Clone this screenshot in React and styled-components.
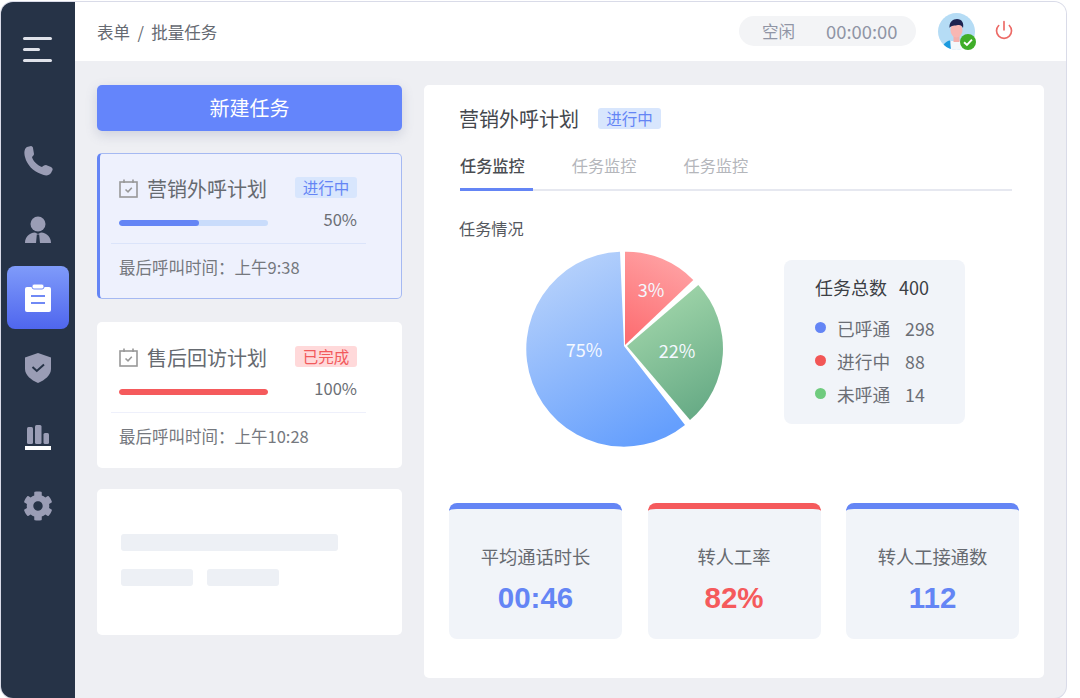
import React from "react";
import styled, { createGlobalStyle } from "styled-components";
import { FaCog } from "react-icons/fa";
import { Power } from "lucide-react";

const GlobalStyle = createGlobalStyle`
  html, body {
    margin: 0;
    padding: 0;
    background: #fff;
    font-family: "Noto Sans CJK SC", "Noto Sans", sans-serif;
  }
  * { box-sizing: border-box; }
`;

const tasks = [
  { id: 1, name: "营销外呼计划", status: "进行中", tone: "blue", percent: 50, fill: 54, time: "上午9:38", active: true },
  { id: 2, name: "售后回访计划", status: "已完成", tone: "red", percent: 100, fill: 100, time: "上午10:28" },
];

const legend = [
  { label: "已呼通", value: 298, color: "#6485f5" },
  { label: "进行中", value: 88, color: "#f25656" },
  { label: "未呼通", value: 14, color: "#6fcb7e" },
];

const stats = [
  { label: "平均通话时长", value: "00:46", color: "#6485f5" },
  { label: "转人工率", value: "82%", color: "#f55a5c" },
  { label: "转人工接通数", value: "112", color: "#6485f5" },
];

function PhoneIcon() {
  return (
    <svg width="32" height="32" viewBox="0 0 32 32" fill="#9a9db5">
      <path d="M5 2 L9 1 C10 1 11 2 11 3 L12 9 C12 10 11 11 10 12 C11 16 15 20 20 22 C21 21 22 20 24 20 L29 22 C31 23 31 25 30 26 L29 28 C27 31 23 31 19 29 C11 26 5 20 3 12 C2 8 2 4 5 2Z" />
    </svg>
  );
}

function UserIcon() {
  return (
    <svg width="28" height="28" viewBox="0 0 28 28" fill="#9a9db5">
      <circle cx="14" cy="8" r="7.5" />
      <path d="M1 27 C1 21 5 17 11 16.5 L14 18 L17 16.5 C23 17 27 21 27 27 Z" />
      <path d="M12.8 18.5 h2.4 l.8 8.5 h-4 Z" fill="#263347" />
    </svg>
  );
}

function ClipboardIcon() {
  return (
    <svg width="26" height="28" viewBox="0 0 26 28">
      <rect x="0" y="3" width="26" height="25" rx="2" fill="#fff" />
      <rect x="7" y="0" width="12" height="5" rx="2" fill="#fff" stroke="#7089f5" strokeWidth="1" />
      <path d="M6 12 h14 M6 19 h14" stroke="#7089f5" strokeWidth="2" />
    </svg>
  );
}

function ShieldIcon() {
  return (
    <svg width="26" height="30" viewBox="0 0 26 30">
      <path d="M13 0 L26 4.5 V16 C26 22 20 27 13 30 C6 27 0 22 0 16 V4.5 Z" fill="#9a9db5" />
      <path d="M7.500 14 L11.800 18 L19 11.500" fill="none" stroke="#263347" strokeWidth="2" />
    </svg>
  );
}

function BarsIcon() {
  return (
    <svg width="26" height="25" viewBox="0 0 26 25">
      <rect x="2" y="2" width="6" height="17" rx="1.500" fill="#9a9db5" />
      <rect x="10" y="0" width="6.500" height="19" rx="1.500" fill="#9a9db5" />
      <rect x="18.500" y="8" width="5.500" height="11" rx="1.500" fill="#9a9db5" />
      <rect x="0" y="21" width="26" height="4" fill="#fff" />
    </svg>
  );
}

function TaskIcon() {
  return (
    <svg width="19" height="19" viewBox="0 0 19 19" fill="none" stroke="#989898" strokeWidth="1.600">
      <rect x="1" y="3" width="17" height="15" />
      <path d="M5 0.500 V4 M14 0.500 V4" />
      <path d="M6.500 10.500 L9 12.800 L12.800 8.800" />
    </svg>
  );
}

function AvatarArt() {
  return (
    <svg width="37" height="37" viewBox="0 0 37 37">
      <defs>
        <clipPath id="avatarClip">
          <circle cx="18.500" cy="18.500" r="18.500" />
        </clipPath>
      </defs>
      <g clipPath="url(#avatarClip)">
        <rect width="37" height="37" fill="#b5dcf5" />
        <path d="M11 37 L13 28 H24 L26 37 Z" fill="#f3f8fb" />
        <path d="M4 37 C4 32 8 28 12 27.500 L13 37 Z" fill="#1b9ade" />
        <rect x="15.500" y="22" width="6" height="7" fill="#f4b0ac" />
        <ellipse cx="18.500" cy="17" rx="6" ry="7.500" fill="#f8b7b3" />
        <path d="M11.500 15 C11 9 15 6 19 6 C24 6 26 10 25 15 C24 12.500 22 11.500 20 12 C17 13 13 12 11.500 15 Z" fill="#1d2350" />
      </g>
    </svg>
  );
}

function PieChart() {
  return (
    <ChartSvg width="200" height="204" viewBox="525 246 200 204">
      <defs>
        <linearGradient id="blueSlice" x1="0.250" y1="0" x2="0.700" y2="1">
          <stop offset="0" stopColor="#b9d3fb" />
          <stop offset="1" stopColor="#659ffd" />
        </linearGradient>
        <linearGradient id="redSlice" x1="0.700" y1="0" x2="0.300" y2="1">
          <stop offset="0" stopColor="#ffa4a6" />
          <stop offset="1" stopColor="#fd6f73" />
        </linearGradient>
        <linearGradient id="greenSlice" x1="0.300" y1="0" x2="0.700" y2="1">
          <stop offset="0" stopColor="#a4d8ac" />
          <stop offset="1" stopColor="#66aa85" />
        </linearGradient>
      </defs>
      <path d="M624 346 L685 425 A97.500 97.500 0 1 1 620 251.700 Z" fill="url(#blueSlice)" />
      <path d="M625 345 L625 251.700 A93 93 0 0 1 693.300 280 Z" fill="url(#redSlice)" />
      <path d="M627 346 L698.300 285 A94 94 0 0 1 690 420 Z" fill="url(#greenSlice)" />
      <PieText x="584" y="357">75%</PieText>
      <PieText x="651" y="297">3%</PieText>
      <PieText x="677" y="358">22%</PieText>
    </ChartSvg>
  );
}

export default function App() {
  return (
    <>
      <GlobalStyle />
      <Window>
        <Sidebar>
          <MenuToggle>
            <MenuLine />
            <MenuLine $short />
            <MenuLine />
          </MenuToggle>
          <NavList>
            <NavItem><PhoneIcon /></NavItem>
            <NavItem><UserIcon /></NavItem>
            <NavItem $active><ClipboardIcon /></NavItem>
            <NavItem><ShieldIcon /></NavItem>
            <NavItem><BarsIcon /></NavItem>
            <NavItem><FaCog size={30} color="#9a9db5" /></NavItem>
          </NavList>
        </Sidebar>
        <Content>
          <Header>
            <Breadcrumb>表单&nbsp;&nbsp;/&nbsp;&nbsp;批量任务</Breadcrumb>
            <HeaderRight>
              <StatusPill>
                <span>空闲</span>
                <Timer>00:00:00</Timer>
              </StatusPill>
              <Avatar>
                <AvatarArt />
                <OnlineBadge>
                  <svg width="16" height="16" viewBox="0 0 15 15">
                    <circle cx="7.500" cy="7.500" r="7.500" fill="#3fae29" />
                    <path d="M3.800 7.800 L6.500 10.300 L11.200 5.200" fill="none" stroke="#fff" strokeWidth="1.800" />
                  </svg>
                </OnlineBadge>
              </Avatar>
              <PowerButton>
                <Power size={20} color="#ec6a66" strokeWidth={2} />
              </PowerButton>
            </HeaderRight>
          </Header>
          <Main>
            <LeftColumn>
              <NewTaskButton>新建任务</NewTaskButton>
              {tasks.map((task) => (
                <TaskCard key={task.id} $active={task.active}>
                  <TaskTop>
                    <TaskIcon />
                    <TaskName>{task.name}</TaskName>
                    <TaskBadge $tone={task.tone}>{task.status}</TaskBadge>
                  </TaskTop>
                  <ProgressRow>
                    <ProgressTrack $tone={task.tone}>
                      <ProgressFill $tone={task.tone} style={{ width: `${task.fill}%` }} />
                    </ProgressTrack>
                    <Percent>{task.percent}%</Percent>
                  </ProgressRow>
                  <TaskFooter $active={task.active}>最后呼叫时间：{task.time}</TaskFooter>
                </TaskCard>
              ))}
              <SkeletonCard>
                <SkeletonBar $wide />
                <SkeletonRow>
                  <SkeletonBar />
                  <SkeletonBar />
                </SkeletonRow>
              </SkeletonCard>
            </LeftColumn>
            <DetailPanel>
              <PanelHead>
                <TitleRow>
                  <PanelTitle>营销外呼计划</PanelTitle>
                  <Badge $tone="blue">进行中</Badge>
                </TitleRow>
                <Tabs>
                  <Tab $active>任务监控</Tab>
                  <Tab>任务监控</Tab>
                  <Tab>任务监控</Tab>
                </Tabs>
                <SectionTitle>任务情况</SectionTitle>
              </PanelHead>
              <ChartRow>
                <PieChart />
                <LegendBox>
                  <LegendTitle>任务总数&nbsp;&nbsp;&nbsp;400</LegendTitle>
                  {legend.map((item) => (
                    <LegendRow key={item.label}>
                      <LegendDot $color={item.color} />
                      <span>{item.label}</span>
                      <LegendValue>{item.value}</LegendValue>
                    </LegendRow>
                  ))}
                </LegendBox>
              </ChartRow>
              <StatGrid>
                {stats.map((stat) => (
                  <StatCard key={stat.label} $color={stat.color}>
                    <StatLabel>{stat.label}</StatLabel>
                    <StatValue $color={stat.color}>{stat.value}</StatValue>
                  </StatCard>
                ))}
              </StatGrid>
            </DetailPanel>
          </Main>
        </Content>
      </Window>
    </>
  );
}

const Window = styled.div`
  display: flex;
  width: 1065px;
  height: 696px;
  margin: 2px 0 0 1px;
  border-radius: 12px;
  overflow: hidden;
  background: #eeeff3;
  box-shadow: 0 0 0 1px #d9dbe8;
`;

const Sidebar = styled.aside`
  flex: 0 0 74px;
  display: flex;
  flex-direction: column;
  align-items: center;
  padding-top: 35px;
  background: #263347;
`;

const MenuToggle = styled.div`
  display: flex;
  flex-direction: column;
  gap: 8px;
  width: 30px;
  margin-bottom: 68px;
`;

const MenuLine = styled.span`
  display: block;
  width: ${(p) => (p.$short ? "17px" : "29px")};
  height: 3px;
  border-radius: 2px;
  background: #dfe2ea;
`;

const NavList = styled.div`
  display: flex;
  flex-direction: column;
  gap: 7px;
`;

const NavItem = styled.div`
  display: flex;
  align-items: center;
  justify-content: center;
  width: 62px;
  height: ${(p) => (p.$active ? "63px" : "62px")};
  margin: ${(p) => (p.$active ? "-2px 0 1px" : "0")};
  border-radius: 8px;
  background: ${(p) => (p.$active ? "linear-gradient(180deg, #7f9bfa 0%, #4f66ee 100%)" : "transparent")};
`;

const Content = styled.div`
  flex: 1;
  display: flex;
  flex-direction: column;
  min-width: 0;
`;

const Header = styled.header`
  flex: 0 0 59px;
  display: flex;
  align-items: center;
  justify-content: space-between;
  padding: 0 52px 0 22px;
  background: #fff;
`;

const Breadcrumb = styled.div`
  font-size: 16.500px;
  color: #666a72;
`;

const HeaderRight = styled.div`
  display: flex;
  align-items: center;
`;

const StatusPill = styled.div`
  display: flex;
  align-items: center;
  gap: 31px;
  width: 177px;
  height: 30px;
  margin-top: -1px;
  padding-left: 23px;
  border-radius: 15px;
  background: #f3f4f6;
  font-size: 16.500px;
  color: #9095a5;
`;

const Timer = styled.span`
  font-size: 18.400px;
`;

const Avatar = styled.div`
  position: relative;
  width: 37px;
  height: 37px;
  margin-left: 22px;
`;

const OnlineBadge = styled.div`
  position: absolute;
  right: -1px;
  bottom: 0;
  line-height: 0;
`;

const PowerButton = styled.div`
  display: flex;
  margin: -4px 0 0 19px;
`;

const Main = styled.main`
  flex: 1;
  display: flex;
  gap: 22px;
  padding: 24px 22px 20px 22px;
  min-height: 0;
`;

const LeftColumn = styled.div`
  flex: 0 0 305px;
  display: flex;
  flex-direction: column;
`;

const NewTaskButton = styled.div`
  display: flex;
  align-items: center;
  justify-content: center;
  height: 46px;
  margin-bottom: 22px;
  padding-bottom: 2px;
  border-radius: 5px;
  background: #6485fb;
  box-shadow: 0 4px 12px rgba(90, 100, 140, 0.22);
  font-size: 20px;
  color: #fff;
`;

const TaskCard = styled.div`
  height: 146px;
  margin-bottom: ${(p) => (p.$active ? "23px" : "21px")};
  padding: ${(p) => (p.$active ? "19px 8px 0 11px" : "20px 8px 0 14px")};
  border-radius: 5px;
  background: ${(p) => (p.$active ? "#eef1fd" : "#fff")};
  border: ${(p) => (p.$active ? "1px solid #a5b9f2" : "none")};
  border-left: ${(p) => (p.$active ? "3px solid #6485f5" : "none")};
`;

const TaskTop = styled.div`
  display: flex;
  align-items: center;
  height: 30px;
  padding-left: 8px;
`;

const TaskName = styled.div`
  width: 148px;
  margin-left: 9px;
  font-size: 20px;
  color: #666a70;
`;

const Badge = styled.span`
  display: inline-flex;
  align-items: center;
  justify-content: center;
  width: 63px;
  height: 21px;
  border-radius: 3px;
  font-size: 15.500px;
  color: ${(p) => (p.$tone === "red" ? "#f25a5c" : "#6485f5")};
  background: ${(p) => (p.$tone === "red" ? "#ffd9da" : "#d8e6fd")};
`;

const TaskBadge = styled(Badge)`
  width: 62px;
  margin-top: -2px;
`;

const ProgressRow = styled.div`
  display: flex;
  align-items: center;
  justify-content: space-between;
  width: 238px;
  height: 28px;
  margin: 5px 0 0 8px;
`;

const ProgressTrack = styled.div`
  width: 149px;
  height: 6px;
  margin-top: 2px;
  border-radius: 3px;
  background: ${(p) => (p.$tone === "red" ? "#ffd9da" : "#c9dcfb")};
  overflow: hidden;
`;

const ProgressFill = styled.div`
  height: 100%;
  border-radius: 3px;
  background: ${(p) => (p.$tone === "red" ? "#f55a5c" : "#6485f5")};
`;

const Percent = styled.span`
  margin-top: -6px;
  font-size: 16.500px;
  color: #6c6f75;
`;

const TaskFooter = styled.div`
  width: 255px;
  margin-top: 7px;
  padding: 11px 0 0 8px;
  border-top: 1px solid ${(p) => (p.$active ? "#dbe4fa" : "#eef0fb")};
  font-size: 16.500px;
  color: #75787e;
`;

const SkeletonCard = styled.div`
  display: flex;
  flex-direction: column;
  gap: 18px;
  height: 146px;
  padding: 45px 0 0 24px;
  border-radius: 5px;
  background: #fff;
`;

const SkeletonRow = styled.div`
  display: flex;
  gap: 14px;
`;

const SkeletonBar = styled.div`
  width: ${(p) => (p.$wide ? "217px" : "72px")};
  height: 17px;
  border-radius: 3px;
  background: #edf0f5;
`;

const DetailPanel = styled.section`
  flex: 1;
  display: flex;
  flex-direction: column;
  padding: 22px 25px 0;
  border-radius: 5px;
  background: #fff;
`;

const PanelHead = styled.div`
  margin: 0 7px 0 10px;
`;

const TitleRow = styled.div`
  display: flex;
  align-items: center;
  gap: 19px;
  height: 22px;
`;

const PanelTitle = styled.h2`
  margin: 0;
  font-size: 20px;
  font-weight: 400;
  color: #44474d;
`;

const Tabs = styled.div`
  display: flex;
  gap: 47px;
  margin: 15px 0 0 1px;
  border-bottom: 2px solid #e6e8f0;
`;

const Tab = styled.div`
  position: relative;
  height: 45px;
  padding-top: 9px;
  font-size: 16.200px;
  font-weight: ${(p) => (p.$active ? 500 : 400)};
  color: ${(p) => (p.$active ? "#4a4d52" : "#b4b6bb")};

  &::after {
    content: "";
    display: ${(p) => (p.$active ? "block" : "none")};
    position: absolute;
    left: 0;
    bottom: -2px;
    width: 73px;
    height: 3px;
    background: #6485f5;
  }
`;

const SectionTitle = styled.div`
  margin-top: 24px;
  font-size: 16.200px;
  line-height: 26px;
  color: #55585e;
`;

const ChartRow = styled.div`
  display: flex;
  align-items: flex-start;
  margin-top: 5px;
  padding-left: 76px;
`;

const ChartSvg = styled.svg`
  display: block;
  flex: none;
`;

const PieText = styled.text`
  font-size: 18px;
  fill: #f4f8ff;
  text-anchor: middle;
`;

const LegendBox = styled.div`
  width: 181px;
  height: 164px;
  margin: 14px 0 0 59px;
  padding: 12px 0 0 31px;
  border-radius: 8px;
  background: #f1f4f9;
  font-size: 17.700px;
  color: #6b6e75;
`;

const LegendTitle = styled.div`
  height: 30px;
  margin-bottom: 9px;
  font-size: 18px;
  line-height: 30px;
  color: #3c3f45;
`;

const LegendRow = styled.div`
  display: flex;
  align-items: center;
  height: 33px;
`;

const LegendDot = styled.i`
  width: 11px;
  height: 11px;
  margin-right: 11px;
  border-radius: 50%;
  background: ${(p) => p.$color};
`;

const LegendValue = styled.span`
  margin-left: 15px;
`;

const StatGrid = styled.div`
  display: flex;
  justify-content: space-between;
  margin-top: 53px;
`;

const StatCard = styled.div`
  display: flex;
  flex-direction: column;
  align-items: center;
  width: 173px;
  height: 136px;
  padding-top: 34px;
  border-radius: 8px;
  border-top: 6px solid ${(p) => p.$color};
  background: #f1f4f9;
`;

const StatLabel = styled.div`
  font-size: 18.300px;
  line-height: 26px;
  color: #666a70;
`;

const StatValue = styled.div`
  margin-top: 9px;
  font-family: "Liberation Sans", Arial, sans-serif;
  font-size: 29.500px;
  font-weight: 700;
  line-height: 40px;
  color: ${(p) => p.$color};
`;
